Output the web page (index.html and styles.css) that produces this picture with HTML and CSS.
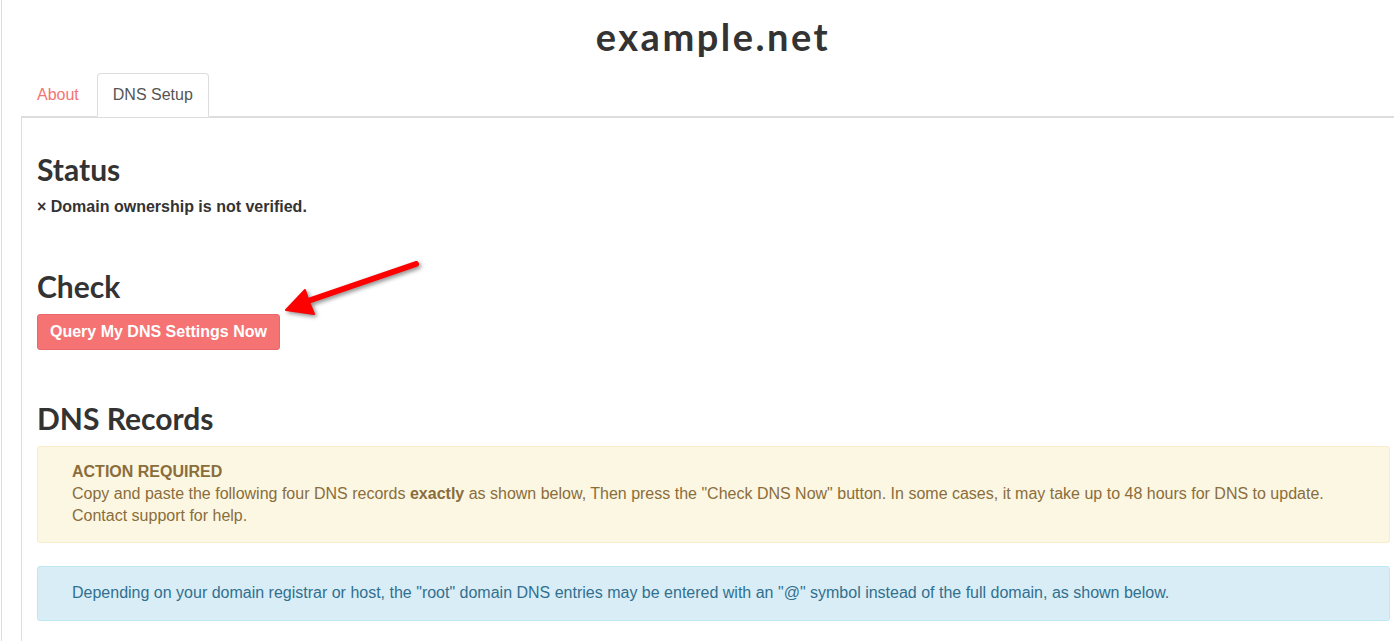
FILE: index.html
```html
<!DOCTYPE html>
<html lang="en">
<head>
<meta charset="utf-8">
<title>example.net</title>
<link rel="stylesheet" href="styles.css">
</head>
<body>
<div class="page">
  <div class="container">
    <h1 class="site-title">example.net</h1>
    <ul class="nav-tabs">
      <li class="tab"><a href="#">About</a></li>
      <li class="tab active"><a href="#">DNS Setup</a></li>
    </ul>
    <div class="tab-content">
      <div class="section">
        <h2>Status</h2>
        <p class="status-line">× Domain ownership is not verified.</p>
      </div>
      <div class="section">
        <h2>Check</h2>
        <div class="btn-row"><button class="btn-query">Query My DNS Settings Now</button></div>
      </div>
      <div class="section last">
        <h2>DNS Records</h2>
        <div class="alert alert-warning">
          <strong>ACTION REQUIRED</strong><br>
          Copy and paste the following four DNS records <strong>exactly</strong> as shown below, Then press the "Check DNS Now" button. In some cases, it may take up to 48 hours for DNS to update.<br>
          Contact support for help.
        </div>
        <div class="alert alert-info">
          Depending on your domain registrar or host, the "root" domain DNS entries may be entered with an "@" symbol instead of the full domain, as shown below.
        </div>
      </div>
    </div>
  </div>
  <svg class="arrow" width="160" height="80" viewBox="270 250 160 80" xmlns="http://www.w3.org/2000/svg">
    <line x1="416" y1="264" x2="305" y2="302" stroke="#ff0000" stroke-width="6" stroke-linecap="round"/>
    <polygon points="286,310 305,290 309,302 314,314" fill="#ff0000" stroke="#ff0000" stroke-width="2" stroke-linejoin="round"/>
  </svg>
</div>
</body>
</html>
```

FILE: styles.css
```css
html, body {
  margin: 0;
  padding: 0;
  background: #fff;
  overflow: hidden;
}

body {
  font-family: "Liberation Sans", Arial, sans-serif;
  font-size: 16px;
  line-height: 1.42857;
  color: #333;
}

.page {
  position: relative;
  margin-left: 1px;
  border-left: 1px solid #ddd;
  padding-left: 19px;
  min-height: 641px;
}

.container {
  width: 1384px;
}

.site-title {
  font-family: Lato, "Open Sans", sans-serif;
  font-weight: 700;
  font-size: 38px;
  line-height: 40px;
  letter-spacing: 2.5px;
  color: #333;
  text-align: center;
  margin: 0;
  padding: 16px 0 17px;
}

.nav-tabs {
  list-style: none;
  margin: 0;
  padding: 0;
  display: flex;
  border-bottom: 1px solid #ddd;
}

.tab {
  margin-bottom: -1px;
}

.tab a {
  display: block;
  margin-right: 2px;
  padding: 10px 15px;
  line-height: 22px;
  border: 1px solid transparent;
  border-radius: 4px 4px 0 0;
  color: #f47474;
  text-decoration: none;
}

.tab.active a {
  color: #555;
  background: #fff;
  border-color: #ddd;
  border-bottom-color: transparent;
}

.tab-content {
  border-left: 1px solid #ddd;
  border-top: 1px solid #ddd;
  padding: 15px 15px 20px;
  min-height: 520px;
}

.section {
  padding-bottom: 21px;
}

.section.last {
  padding-bottom: 0;
}

h2 {
  font-family: Lato, "Open Sans", sans-serif;
  font-weight: 700;
  font-size: 30px;
  line-height: 1.1;
  color: #333;
  margin: 20px 0 10px;
}

.status-line {
  font-weight: 700;
  margin: 0 0 10px;
}

.btn-row {
  display: flex;
  padding-top: 1px;
  margin: 0 0 11px;
}

.btn-query {
  font-family: "Liberation Sans", Arial, sans-serif;
  font-size: 16px;
  font-weight: 700;
  line-height: 22px;
  color: #fff;
  background: #f57373;
  border: 1px solid #ec6767;
  border-radius: 3px;
  padding: 6px 12px;
  cursor: pointer;
}

.alert {
  border: 1px solid transparent;
  border-radius: 3px;
  margin: 0 0 23px;
}

.alert-warning {
  margin-top: 11px;
  background: #fcf7e3;
  border-color: #faebcc;
  color: #8a6d3b;
  line-height: 22px;
  padding: 14px 34px 15px;
}

.alert-info {
  background: #d9edf7;
  border-color: #bce8f1;
  color: #31708f;
  padding: 15px 34px;
}

.arrow {
  position: absolute;
  left: 268px;
  top: 250px;
  filter: drop-shadow(2px 2px 2px rgba(0, 0, 0, 0.45));
  overflow: visible;
}
```
